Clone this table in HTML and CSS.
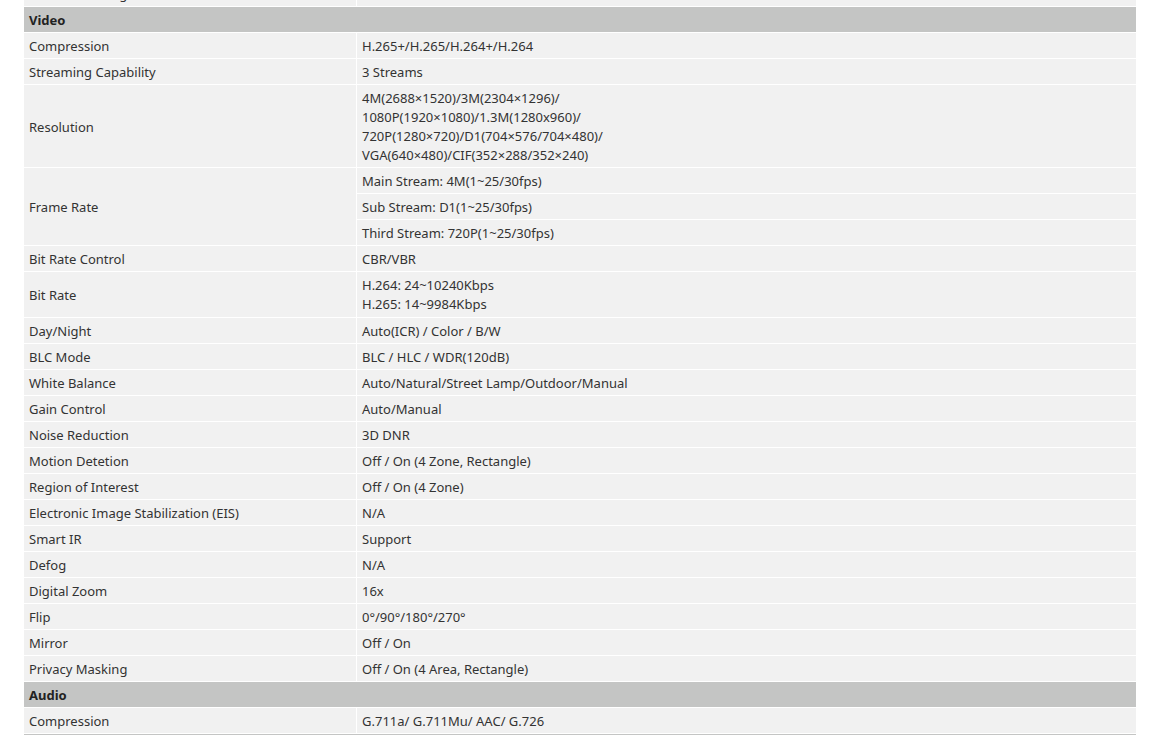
FILE: index.html
```html
<!DOCTYPE html>
<html lang="en">

<head>
   <meta charset="UTF-8">
   <meta name="viewport" content="width=device-width, initial-scale=1.0">
   <title>Specifications</title>
   <link rel="stylesheet" href="styles.css">
</head>

<body>
   <div class="spec-wrap">
      <table class="spec-table">
         <tr><td class="label">Auto Iris Setting</td><td>N/A</td></tr>

         <tr><th colspan="2">Video</th></tr>
         <tr><td class="label">Compression</td><td>H.265+/H.265/H.264+/H.264</td></tr>
         <tr><td class="label">Streaming Capability</td><td>3 Streams</td></tr>
         <tr>
            <td class="label">Resolution</td>
            <td>4M(2688×1520)/3M(2304×1296)/<br>1080P(1920×1080)/1.3M(1280x960)/<br>720P(1280×720)/D1(704×576/704×480)/<br>VGA(640×480)/CIF(352×288/352×240)</td>
         </tr>
         <tr><td class="label" rowspan="3">Frame Rate</td><td>Main Stream: 4M(1~25/30fps)</td></tr>
         <tr><td>Sub Stream: D1(1~25/30fps)</td></tr>
         <tr><td>Third Stream: 720P(1~25/30fps)</td></tr>
         <tr><td class="label">Bit Rate Control</td><td>CBR/VBR</td></tr>
         <tr><td class="label">Bit Rate</td><td class="two-line">H.264: 24~10240Kbps<br>H.265: 14~9984Kbps</td></tr>
         <tr><td class="label">Day/Night</td><td>Auto(ICR) / Color / B/W</td></tr>
         <tr><td class="label">BLC Mode</td><td>BLC / HLC / WDR(120dB)</td></tr>
         <tr><td class="label">White Balance</td><td>Auto/Natural/Street Lamp/Outdoor/Manual</td></tr>
         <tr><td class="label">Gain Control</td><td>Auto/Manual</td></tr>
         <tr><td class="label">Noise Reduction</td><td>3D DNR</td></tr>
         <tr><td class="label">Motion Detetion</td><td>Off / On (4 Zone, Rectangle)</td></tr>
         <tr><td class="label">Region of Interest</td><td>Off / On (4 Zone)</td></tr>
         <tr><td class="label">Electronic Image Stabilization (EIS)</td><td>N/A</td></tr>
         <tr><td class="label">Smart IR</td><td>Support</td></tr>
         <tr><td class="label">Defog</td><td>N/A</td></tr>
         <tr><td class="label">Digital Zoom</td><td>16x</td></tr>
         <tr><td class="label">Flip</td><td>0°/90°/180°/270°</td></tr>
         <tr><td class="label">Mirror</td><td>Off / On</td></tr>
         <tr><td class="label">Privacy Masking</td><td>Off / On (4 Area, Rectangle)</td></tr>

         <tr><th colspan="2">Audio</th></tr>
         <tr><td class="label">Compression</td><td>G.711a/ G.711Mu/ AAC/ G.726</td></tr>

         <tr><th colspan="2">Network</th></tr>
         <tr><td class="label">Ethernet</td><td>RJ-45 (10/100Base-T)</td></tr>
      </table>
   </div>
</body>

</html>
```

FILE: styles.css
```css
html,
body {
   margin: 0;
   overflow: hidden;
   background-color: #fff;
}

body {
   font-family: "Noto Sans", "Open Sans", sans-serif;
   font-size: 13px;
   color: #333;
}

.spec-wrap {
   padding-left: 23px;
}

.spec-table {
   width: 1114px;
   border-collapse: separate;
   border-spacing: 1px;
   margin-top: -20px;
}

.spec-table td {
   background-color: #f1f1f1;
   padding: 4px 5px 2px;
   line-height: 19px;
   vertical-align: middle;
}

.spec-table td.label {
   width: 322px;
}

.spec-table td.two-line {
   padding-bottom: 3px;
}

.spec-table th {
   background-color: #c4c5c4;
   color: #222;
   text-align: left;
   font-weight: bold;
   padding: 4px 5px 2px;
   line-height: 19px;
}
```
